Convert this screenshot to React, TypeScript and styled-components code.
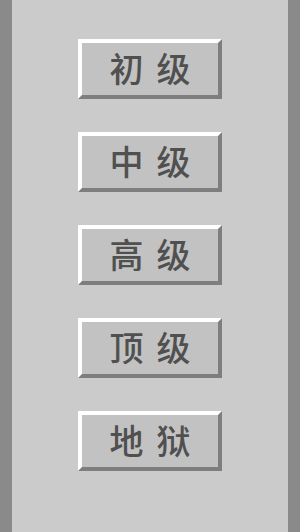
import styled, { createGlobalStyle } from 'styled-components'

const levels = ['初级', '中级', '高级', '顶级', '地狱']

const GlobalStyle = createGlobalStyle`
  html, body {
    margin: 0;
    padding: 0;
    background: #cbcbcb;
  }
`

export default function App() {
  return (
    <>
      <GlobalStyle />
      <Screen>
        <SideBar />
        <Menu>
          {levels.map((label) => (
            <LevelButton key={label}>{label}</LevelButton>
          ))}
        </Menu>
        <SideBar />
      </Screen>
    </>
  )
}

const Screen = styled.div`
  display: flex;
  width: 300px;
  height: 532px;
  background: #cbcbcb;
  overflow: hidden;
`

const SideBar = styled.div`
  width: 12px;
  flex-shrink: 0;
  background: #8a8a8a;
`

const Menu = styled.div`
  flex: 1;
  display: flex;
  flex-direction: column;
  align-items: center;
  gap: 33px;
  padding-top: 39px;
`

const LevelButton = styled.button`
  box-sizing: border-box;
  width: 144px;
  height: 60px;
  padding: 0 0 2px 13px;
  border-style: solid;
  border-width: 4px;
  border-color: #ffffff #7e7e7e #7e7e7e #ffffff;
  background: #c2c2c2;
  color: #505050;
  font-family: 'Noto Sans CJK SC', 'Noto Sans', sans-serif;
  font-size: 34px;
  font-weight: 500;
  letter-spacing: 13px;
  line-height: 1;
  cursor: pointer;
`
